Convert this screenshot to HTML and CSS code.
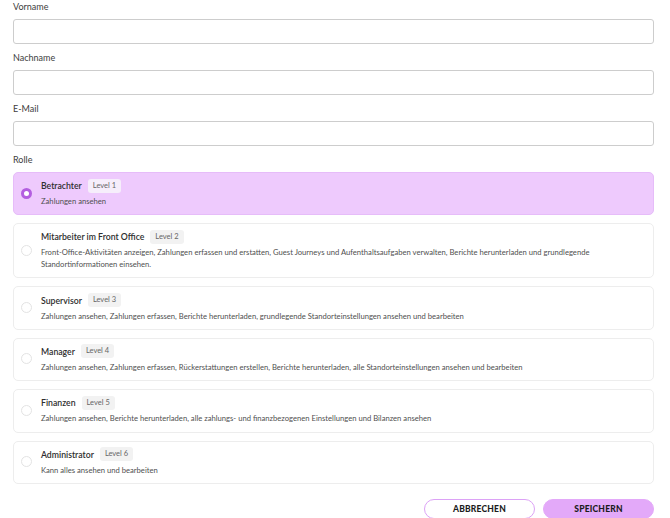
FILE: index.html
```html
<!DOCTYPE html>
<html lang="de">
<head>
<meta charset="utf-8">
<title>Benutzer</title>
<link rel="stylesheet" href="styles.css">
</head>
<body>
<form class="form">
  <div class="field">
    <label class="label">Vorname</label>
    <input class="input" type="text">
  </div>
  <div class="field">
    <label class="label">Nachname</label>
    <input class="input" type="text">
  </div>
  <div class="field">
    <label class="label">E-Mail</label>
    <input class="input" type="text">
  </div>
  <div class="field">
    <div class="label">Rolle</div>
    <div class="roles">
      <div class="role selected">
        <span class="radio"></span>
        <div class="role-body">
          <div class="role-head"><span class="role-title">Betrachter</span><span class="badge">Level 1</span></div>
          <div class="role-desc">Zahlungen ansehen</div>
        </div>
      </div>
      <div class="role">
        <span class="radio"></span>
        <div class="role-body">
          <div class="role-head"><span class="role-title">Mitarbeiter im Front Office</span><span class="badge">Level 2</span></div>
          <div class="role-desc">Front-Office-Aktivitäten anzeigen, Zahlungen erfassen und erstatten, Guest Journeys und Aufenthaltsaufgaben verwalten, Berichte herunterladen und grundlegende Standortinformationen einsehen.</div>
        </div>
      </div>
      <div class="role">
        <span class="radio"></span>
        <div class="role-body">
          <div class="role-head"><span class="role-title">Supervisor</span><span class="badge">Level 3</span></div>
          <div class="role-desc">Zahlungen ansehen, Zahlungen erfassen, Berichte herunterladen, grundlegende Standorteinstellungen ansehen und bearbeiten</div>
        </div>
      </div>
      <div class="role">
        <span class="radio"></span>
        <div class="role-body">
          <div class="role-head"><span class="role-title">Manager</span><span class="badge">Level 4</span></div>
          <div class="role-desc">Zahlungen ansehen, Zahlungen erfassen, Rückerstattungen erstellen, Berichte herunterladen, alle Standorteinstellungen ansehen und bearbeiten</div>
        </div>
      </div>
      <div class="role">
        <span class="radio"></span>
        <div class="role-body">
          <div class="role-head"><span class="role-title">Finanzen</span><span class="badge">Level 5</span></div>
          <div class="role-desc">Zahlungen ansehen, Berichte herunterladen, alle zahlungs- und finanzbezogenen Einstellungen und Bilanzen ansehen</div>
        </div>
      </div>
      <div class="role">
        <span class="radio"></span>
        <div class="role-body">
          <div class="role-head"><span class="role-title">Administrator</span><span class="badge">Level 6</span></div>
          <div class="role-desc">Kann alles ansehen und bearbeiten</div>
        </div>
      </div>
    </div>
  </div>
  <div class="actions">
    <button type="button" class="btn btn-outline">ABBRECHEN</button>
    <button type="button" class="btn btn-fill">SPEICHERN</button>
  </div>
</form>
</body>
</html>
```
FILE: styles.css
```css
* { box-sizing: border-box; }
html, body { margin: 0; padding: 0; background: #fff; }
body {
  font-family: Lato, "Liberation Sans", sans-serif;
  color: #2a2a2a;
  overflow: hidden;
}
.form {
  padding: 1px 16px 0 13px;
  display: flex;
  flex-direction: column;
  gap: 8px;
}
.field { display: flex; flex-direction: column; }
.label {
  display: block;
  font-size: 9px;
  line-height: 12px;
  height: 12px;
  color: #3d3d3d;
  margin-bottom: 6px;
}
.input {
  display: block;
  width: 100%;
  height: 25px;
  border: 1px solid #cdcdcd;
  border-radius: 3px;
  background: #fff;
  margin: 0;
  padding: 0 8px;
  font: inherit;
}
.roles { display: flex; flex-direction: column; gap: 8px; }
.role {
  display: flex;
  align-items: center;
  gap: 9px;
  border: 1px solid #ededed;
  border-radius: 5px;
  padding: 6px 12px 7px 7px;
  background: #fff;
  min-height: 43.4px;
}
.role.selected {
  background: #eecafd;
  border-color: #e6bcf9;
}
.radio {
  flex: none;
  width: 11px;
  height: 11px;
  border-radius: 50%;
  border: 1px solid #e3e3e3;
  background: #fff;
}
.role.selected .radio {
  border: 3.5px solid #b35ee0;
  background: #fff;
}
.role-body { flex: 1; min-width: 0; }
.role-head {
  display: flex;
  align-items: center;
  gap: 6px;
  height: 13px;
  margin-bottom: 3px;
}
.role-title {
  font-size: 8.7px;
  font-weight: 600;
  color: #2e2e2e;
}
.badge {
  font-size: 7.5px;
  line-height: 14px;
  padding: 0 5px;
  border-radius: 3px;
  background: #f2f2f2;
  color: #666;
}
.role.selected .badge { background: #f6eefb; }
.role-desc {
  font-size: 7.65px;
  line-height: 12px;
  color: #4f4f4f;
}
.actions {
  display: flex;
  justify-content: flex-end;
  gap: 8px;
  margin-top: 7px;
}
.btn {
  width: 111px;
  height: 20px;
  border-radius: 10px;
  font-family: Lato, "Liberation Sans", sans-serif;
  font-weight: 900;
  font-size: 8.5px;
  letter-spacing: 0.2px;
  color: #1c1c1c;
  padding: 0;
  margin: 0;
}
.btn-outline {
  background: #fff;
  border: 1.5px solid #dca2f6;
}
.btn-fill {
  background: #e3a9f9;
  border: 1.5px solid #e3a9f9;
}
```
